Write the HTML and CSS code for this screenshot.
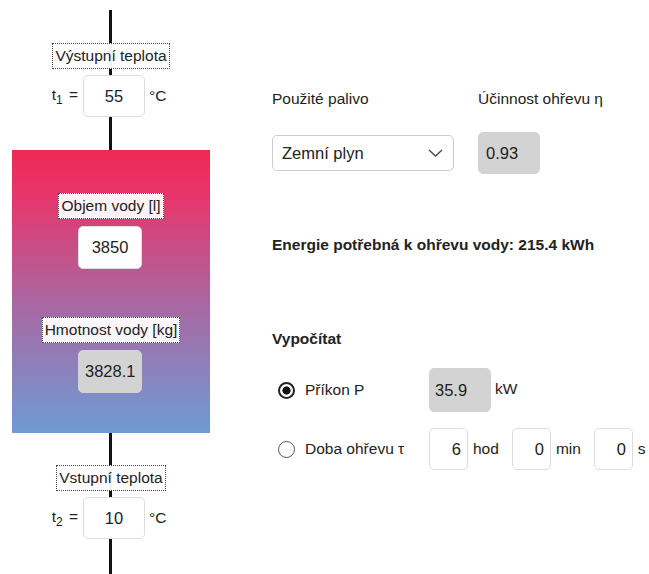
FILE: index.html
```html
<!DOCTYPE html>
<html lang="cs">
<head>
    <meta charset="UTF-8">
    <meta name="viewport" content="width=device-width, initial-scale=1.0">
    <title>Ohřev vody</title>
    <link rel="stylesheet" href="styles.css">
</head>
<body>

<div class="scheme">
    <span class="tag tag-top">Výstupní teplota</span>
    <div class="temp-row">
        <span class="temp-name">t<sub>1</sub> =</span>
        <input class="field" type="text" value="55">
        <span class="temp-unit">°C</span>
    </div>

    <div class="tank">
        <span class="tag">Objem vody [l]</span>
        <input class="field tank-field" type="text" value="3850">
        <span class="tag tag-mass">Hmotnost vody [kg]</span>
        <input class="field tank-field readonly" type="text" value="3828.1" readonly>
    </div>

    <span class="tag tag-bottom">Vstupní teplota</span>
    <div class="temp-row">
        <span class="temp-name">t<sub>2</sub> =</span>
        <input class="field" type="text" value="10">
        <span class="temp-unit">°C</span>
    </div>
</div>

<div class="panel">
    <div class="fuel-grid">
        <label for="fuel">Použité palivo</label>
        <label for="eff">Účinnost ohřevu η</label>
        <select id="fuel" class="fuel-select">
            <option>Zemní plyn</option>
            <option>Elektřina</option>
            <option>Dřevo</option>
        </select>
        <input id="eff" class="field readonly eff" type="text" value="0.93" readonly>
    </div>

    <p class="energy">Energie potřebná k ohřevu vody: 215.4 kWh</p>

    <h3 class="calc-title">Vypočítat</h3>

    <div class="calc-row">
        <label class="radio-label"><input type="radio" name="calc" checked> Příkon P</label>
        <input class="field readonly power" type="text" value="35.9" readonly>
        <span class="unit">kW</span>
    </div>

    <div class="calc-row">
        <label class="radio-label"><input type="radio" name="calc"> Doba ohřevu τ</label>
        <input class="field time" type="text" value="6">
        <span class="unit">hod</span>
        <input class="field time" type="text" value="0">
        <span class="unit">min</span>
        <input class="field time" type="text" value="0">
        <span class="unit">s</span>
    </div>
</div>

</body>
</html>
```

FILE: styles.css
```css
body {
    font-family: 'Liberation Sans', Arial, sans-serif;
    font-size: 15.5px;
    color: #222;
    background-color: #fff;
    margin: 0;
    padding: 0;
    display: flex;
}

/* levy sloupec - schema bojleru */
.scheme {
    width: 222px;
    flex-shrink: 0;
    margin-top: 10px;
    height: 564px;
    display: flex;
    flex-direction: column;
    align-items: center;
    background: linear-gradient(#111, #111) no-repeat 109px 0 / 3px 100%;
}

.tag {
    display: inline-block;
    padding: 3px 2px;
    line-height: 18px;
    border: 1px dotted #444;
    background-color: rgba(255, 255, 255, 0.94);
}

.tag-top {
    margin-top: 33px;
}

.tag-bottom {
    margin-top: 32px;
}

.temp-row {
    align-self: stretch;
    display: flex;
    align-items: center;
    margin-top: 6px;
}

.temp-name {
    width: 83px;
    padding-right: 5px;
    box-sizing: border-box;
    text-align: right;
    white-space: nowrap;
}

.temp-name sub {
    font-size: 12px;
    vertical-align: -4px;
    margin-right: 2px;
}

.temp-unit {
    margin-left: 4px;
}

.field {
    font-family: inherit;
    font-size: 16.5px;
    color: #222;
    width: 62px;
    height: 42px;
    box-sizing: border-box;
    border: 1px solid #ddd;
    border-radius: 5px;
    background-color: #fff;
    text-align: center;
    padding: 0 6px;
    outline: none;
}

.readonly {
    background-color: #d3d3d3;
    border-color: #d3d3d3;
}

.tank {
    width: 198px;
    height: 283px;
    margin-top: 33px;
    align-self: flex-start;
    margin-left: 12px;
    box-sizing: border-box;
    padding-top: 43px;
    display: flex;
    flex-direction: column;
    align-items: center;
    background: linear-gradient(#ee2953, #e9346a 15%, #a868a3 55%, #6f9bd4);
}

.tank-field {
    width: 64px;
    height: 43px;
    margin-top: 7px;
    margin-left: -2px;
}

.tag-mass {
    margin-top: 48px;
}

/* pravy panel */
.panel {
    margin-left: 50px;
    padding-top: 90px;
}

.fuel-grid {
    display: grid;
    grid-template-columns: 182px 65px;
    column-gap: 24px;
    row-gap: 24px;
    align-items: center;
}

.fuel-grid label {
    line-height: 18px;
    white-space: nowrap;
}

.fuel-select {
    font-family: inherit;
    font-size: 16.5px;
    color: #222;
    height: 36px;
    border: 1px solid #ccc;
    border-radius: 5px;
    padding: 0 9px;
    appearance: none;
    -webkit-appearance: none;
    background: #fff url("data:image/svg+xml,%3Csvg xmlns='http://www.w3.org/2000/svg' width='15' height='8' viewBox='0 0 15 8'%3E%3Cpath d='M1 1l6.5 6 6.5-6' fill='none' stroke='%23444' stroke-width='1.3'/%3E%3C/svg%3E") no-repeat right 10px center;
}

.eff {
    text-align: left;
    padding-left: 7px;
}

.energy {
    font-weight: bold;
    margin: 62px 0 0;
    line-height: 18px;
}

.calc-title {
    font-size: 15.5px;
    margin: 76px 0 0;
    line-height: 18px;
}

.calc-row {
    display: flex;
    align-items: center;
    margin-top: 20px;
}

.calc-row + .calc-row {
    margin-top: 16px;
}

.radio-label {
    width: 157px;
    display: flex;
    align-items: center;
}

.radio-label input {
    appearance: none;
    -webkit-appearance: none;
    width: 17px;
    height: 17px;
    margin: 0 10px 0 6px;
    border: 1.5px solid #555;
    border-radius: 50%;
    box-sizing: border-box;
}

.radio-label input:checked {
    border: 2px solid #222;
    background: radial-gradient(circle, #111 3.8px, #fff 4.4px);
}

.power {
    height: 44px;
    text-align: left;
    padding-left: 5px;
}

.time {
    width: 39px;
    text-align: right;
    padding-right: 6px;
}

.unit {
    margin: 0 13px 0 5px;
}

.unit:last-child {
    margin-right: 0;
}

.power + .unit {
    margin-left: 4px;
    margin-top: -2px;
}
```
